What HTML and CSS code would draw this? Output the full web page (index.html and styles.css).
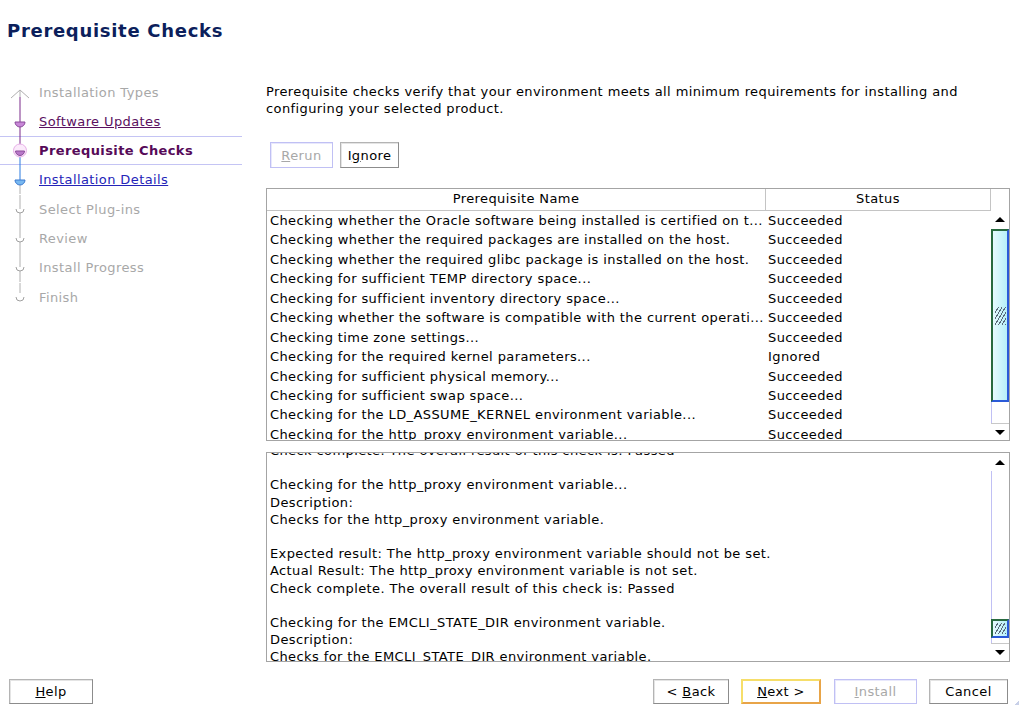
FILE: index.html
```html
<!DOCTYPE html>
<html lang="en">
  <head>
    <meta charset="UTF-8" />
    <title>Prerequisite Checks</title>
    <link rel="stylesheet" href="styles.css">
  </head>
  <body>
    <div class="window">
      <header class="title-bar">
        <h1>Prerequisite Checks</h1>
      </header>

      <div class="main">
        <nav class="steps">
          <div class="step">
            <svg class="track" width="31" height="29" viewBox="0 0 31 29">
              <path d="M3 20 L12 12 L21 20" fill="none" stroke="#b0b0b0" stroke-width="1"/>
              <line x1="12" y1="12" x2="12" y2="19" stroke="#b0b0b0"/>
              <line x1="12" y1="19" x2="12" y2="29" stroke="#7a2a8a"/>
            </svg>
            <span class="label">Installation Types</span>
          </div>
          <div class="step">
            <svg class="track" width="31" height="29" viewBox="0 0 31 29">
              <line x1="12" y1="0" x2="12" y2="29" stroke="#7a2a8a"/>
              <path d="M7 15 A5 5 0 0 0 17 15 Z" fill="#c888d8" stroke="#8a4a9a"/>
            </svg>
            <a class="label visited" href="#">Software Updates</a>
          </div>
          <div class="step current">
            <svg class="track" width="31" height="29" viewBox="0 0 31 29">
              <line x1="12" y1="0" x2="12" y2="14" stroke="#7a2a8a"/>
              <line x1="12" y1="14" x2="12" y2="29" stroke="#2a7ae0"/>
              <circle cx="12" cy="14.5" r="6.5" fill="#fbeafb" stroke="#e8b0e8"/>
              <path d="M7.5 15 A4.5 4.5 0 0 0 16.5 15 Z" fill="#b878c8" stroke="#8a4a9a"/>
            </svg>
            <span class="label">Prerequisite Checks</span>
          </div>
          <div class="step">
            <svg class="track" width="31" height="29" viewBox="0 0 31 29">
              <line x1="12" y1="0" x2="12" y2="15" stroke="#2a7ae0"/>
              <line x1="12" y1="18" x2="12" y2="29" stroke="#b0b0b0"/>
              <path d="M7 15 A5 5 0 0 0 17 15 Z" fill="#78b8f0" stroke="#3a7ad0"/>
            </svg>
            <a class="label link" href="#">Installation Details</a>
          </div>
          <div class="step">
            <svg class="track" width="31" height="29" viewBox="0 0 31 29">
              <line x1="12" y1="0" x2="12" y2="29" stroke="#b0b0b0"/>
              <path d="M8 14 A4 4 0 0 0 16 14" fill="#fff" stroke="#a0a0a0"/>
            </svg>
            <span class="label">Select Plug-ins</span>
          </div>
          <div class="step">
            <svg class="track" width="31" height="29" viewBox="0 0 31 29">
              <line x1="12" y1="0" x2="12" y2="29" stroke="#b0b0b0"/>
              <path d="M8 14 A4 4 0 0 0 16 14" fill="#fff" stroke="#a0a0a0"/>
            </svg>
            <span class="label">Review</span>
          </div>
          <div class="step">
            <svg class="track" width="31" height="29" viewBox="0 0 31 29">
              <line x1="12" y1="0" x2="12" y2="29" stroke="#b0b0b0"/>
              <path d="M8 14 A4 4 0 0 0 16 14" fill="#fff" stroke="#a0a0a0"/>
            </svg>
            <span class="label">Install Progress</span>
          </div>
          <div class="step">
            <svg class="track" width="31" height="29" viewBox="0 0 31 29">
              <line x1="12" y1="0" x2="12" y2="10" stroke="#b0b0b0"/>
              <path d="M8 14 A4 4 0 0 0 16 14" fill="#fff" stroke="#a0a0a0"/>
            </svg>
            <span class="label">Finish</span>
          </div>
        </nav>

        <section class="content">
          <p class="intro">Prerequisite checks verify that your environment meets all minimum requirements for installing and configuring your selected product.</p>

          <div class="actions">
            <button class="btn rerun disabled"><u>R</u>erun</button>
            <button class="btn ignore">I<u>g</u>nore</button>
          </div>

          <div class="checks">
            <div class="checks-head">
              <div class="col-name">Prerequisite Name</div>
              <div class="col-status">Status</div>
              <div class="corner"></div>
            </div>
            <div class="checks-body">
              <div class="rows">
                <div class="row"><span class="col-name">Checking whether the Oracle software being installed is certified on t...</span><span class="col-status">Succeeded</span></div>
                <div class="row"><span class="col-name">Checking whether the required packages are installed on the host.</span><span class="col-status">Succeeded</span></div>
                <div class="row"><span class="col-name">Checking whether the required glibc package is installed on the host.</span><span class="col-status">Succeeded</span></div>
                <div class="row"><span class="col-name">Checking for sufficient TEMP directory space...</span><span class="col-status">Succeeded</span></div>
                <div class="row"><span class="col-name">Checking for sufficient inventory directory space...</span><span class="col-status">Succeeded</span></div>
                <div class="row"><span class="col-name">Checking whether the software is compatible with the current operati...</span><span class="col-status">Succeeded</span></div>
                <div class="row"><span class="col-name">Checking time zone settings...</span><span class="col-status">Succeeded</span></div>
                <div class="row"><span class="col-name">Checking for the required kernel parameters...</span><span class="col-status">Ignored</span></div>
                <div class="row"><span class="col-name">Checking for sufficient physical memory...</span><span class="col-status">Succeeded</span></div>
                <div class="row"><span class="col-name">Checking for sufficient swap space...</span><span class="col-status">Succeeded</span></div>
                <div class="row"><span class="col-name">Checking for the LD_ASSUME_KERNEL environment variable...</span><span class="col-status">Succeeded</span></div>
                <div class="row"><span class="col-name">Checking for the http_proxy environment variable...</span><span class="col-status">Succeeded</span></div>
              </div>
              <div class="scrollbar table-scroll">
                <div class="arrow up"></div>
                <div class="gap-top"></div>
                <div class="thumb"><span class="grip"></span></div>
                <div class="track-rest"></div>
                <div class="arrow down"></div>
              </div>
            </div>
          </div>

          <div class="details">
            <div class="details-text"><pre>Check complete. The overall result of this check is: Passed

Checking for the http_proxy environment variable...
Description:
Checks for the http_proxy environment variable.

Expected result: The http_proxy environment variable should not be set.
Actual Result: The http_proxy environment variable is not set.
Check complete. The overall result of this check is: Passed

Checking for the EMCLI_STATE_DIR environment variable.
Description:
Checks for the EMCLI_STATE_DIR environment variable.
Expected result: The EMCLI_STATE_DIR environment variable should not be set.</pre></div>
            <div class="scrollbar detail-scroll">
              <div class="arrow up"></div>
              <div class="track-top"></div>
              <div class="thumb small"><span class="grip"></span></div>
              <div class="track-rest"></div>
              <div class="arrow down"></div>
            </div>
          </div>
        </section>
      </div>

      <footer class="footer">
        <button class="btn wide"><u>H</u>elp</button>
        <div class="nav-buttons">
          <button class="btn back">&lt; <u>B</u>ack</button>
          <button class="btn next"><u>N</u>ext &gt;</button>
          <button class="btn install disabled"><u>I</u>nstall</button>
          <button class="btn cancel">Cancel</button>
        </div>
      </footer>
      <span class="resize-grip"></span>
    </div>
  </body>
</html>
```

FILE: styles.css
```css
* {
  box-sizing: border-box;
}
body {
  margin: 0;
  background-color: white;
  font-family: "DejaVu Sans", Verdana, sans-serif;
  font-size: 13px;
  letter-spacing: 0.4px;
  color: #000;
}
.window {
  position: relative;
  width: 1021px;
  height: 707px;
  display: flex;
  flex-direction: column;
  overflow: hidden;
}
.title-bar {
  height: 77px;
  padding: 19px 0 0 7px;
}
.title-bar h1 {
  margin: 0;
  font-size: 18px;
  line-height: 24px;
  font-weight: bold;
  color: #0c1f5c;
  letter-spacing: 0.7px;
}
.main {
  display: flex;
  height: 586px;
}

/* left step list */
.steps {
  width: 242px;
  margin-right: 24px;
  padding-top: 0.4px;
}
.step {
  display: flex;
  align-items: center;
  height: 29.3px;
  padding-left: 8px;
  color: #a8a8a8;
}
.step .track {
  flex: none;
  display: block;
}
.step .label {
  white-space: nowrap;
}
.step.current {
  border-top: 1px solid #c4c4f4;
  border-bottom: 1px solid #c4c4f4;
  color: #560a58;
  font-weight: bold;
}
.step .visited {
  color: #5a1060;
}
.step .link {
  color: #2424b8;
}

/* right content */
.content {
  width: 744px;
  display: flex;
  flex-direction: column;
}
.intro {
  margin: 6px 0 0 0;
  line-height: 17px;
  padding-right: 40px;
}
.actions {
  display: flex;
  gap: 7px;
  margin: 25px 0 0 4px;
}
.btn {
  font-family: "DejaVu Sans", Verdana, sans-serif;
  font-size: 13px;
  letter-spacing: 0.4px;
  height: 26px;
  padding: 0;
  background: white;
  color: #000;
  border: 1px solid #b4b4b4;
  border-right-color: #8c8c8c;
  border-bottom-color: #8c8c8c;
  box-shadow: inset 1px 1px 0 #e4e4e4;
}
.btn.rerun {
  width: 63px;
}
.btn.ignore {
  width: 59px;
}
.btn.disabled {
  color: #a8a8a8;
  border-color: #c0c0f4;
  box-shadow: inset 1px 1px 0 #e8e8fc;
}

/* prerequisite table */
.checks {
  margin-top: 20px;
  height: 253px;
  border: 1px solid #a4a4a4;
  display: flex;
  flex-direction: column;
  overflow: hidden;
}
.checks-head {
  display: flex;
  height: 22px;
  flex: none;
}
.checks-head div {
  line-height: 20px;
  text-align: center;
  border-bottom: 1px solid #c4c4c4;
}
.checks-head .col-name {
  width: 499px;
  border-right: 1px solid #c4c4c4;
}
.checks-head .col-status {
  width: 225px;
  border-right: 1px solid #c4c4c4;
}
.checks-head .corner {
  flex: 1;
  border-bottom: none;
}
.checks-body {
  display: flex;
  flex: 1;
  min-height: 0;
}
.rows {
  width: 724px;
  overflow: hidden;
}
.row {
  display: flex;
  height: 19.45px;
  line-height: 19px;
  white-space: nowrap;
}
.row .col-name {
  width: 499px;
  padding-left: 3px;
  overflow: hidden;
}
.row .col-status {
  padding-left: 2px;
}

/* scrollbars */
.scrollbar {
  width: 18px;
  display: flex;
  flex-direction: column;
  margin-left: auto;
}
.arrow {
  position: relative;
  height: 17px;
  flex: none;
  background: white;
}
.arrow::after {
  content: "";
  position: absolute;
  left: 4px;
  top: 6px;
  border-left: 5px solid transparent;
  border-right: 5px solid transparent;
}
.arrow.up::after {
  border-bottom: 5px solid #000;
}
.arrow.down {
  border-top: 1px solid #c8c8c8;
}
.arrow.down::after {
  border-top: 5px solid #000;
}
.gap-top {
  height: 1px;
}
.thumb {
  display: flex;
  align-items: center;
  justify-content: center;
  border: 2px solid #2a5ad8;
  border-top-color: #286a40;
  border-left-color: #286a40;
  background: linear-gradient(to right, #e6fbff, #b6f0f8);
}
.table-scroll .thumb {
  height: 173px;
}
.grip {
  width: 11px;
  height: 18px;
  background: repeating-linear-gradient(-60deg, #5a6a7a 0 1px, transparent 1px 3px);
}
.thumb.small {
  height: 19px;
}
.thumb.small .grip {
  height: 11px;
}
.track-top,
.track-rest {
  border-left: 1px solid #c0c0f4;
  background: white;
}
.table-scroll .track-rest {
  flex: 1;
}
.detail-scroll .track-top {
  flex: 1;
}
.detail-scroll .track-rest {
  height: 5px;
}

/* details box */
.details {
  margin-top: 11px;
  height: 210px;
  border: 1px solid #a4a4a4;
  display: flex;
  overflow: hidden;
}
.detail-scroll {
  padding-top: 1px;
  padding-bottom: 1px;
}
.details-text {
  flex: 1;
  overflow: hidden;
  padding-left: 3px;
}
.details-text pre {
  margin: -11px 0 0 0;
  font-family: "DejaVu Sans", Verdana, sans-serif;
  font-size: 13px;
  letter-spacing: 0.4px;
  line-height: 17.2px;
}

/* footer */
.footer {
  display: flex;
  justify-content: space-between;
  padding: 16px 13px 0 9px;
}
.btn.wide {
  width: 84px;
  height: 25px;
}
.nav-buttons {
  display: flex;
  gap: 12px;
}
.nav-buttons .btn {
  height: 25px;
}
.btn.back {
  width: 76px;
}
.btn.next {
  width: 80px;
  border: 2px solid #f6de6a;
  border-right-color: #e8a448;
  border-bottom-color: #e8a448;
  box-shadow: none;
}
.btn.install {
  width: 83px;
  margin-left: 1px;
}
.btn.cancel {
  width: 79px;
}
.resize-grip {
  position: absolute;
  right: 2px;
  bottom: 2px;
  width: 4px;
  height: 4px;
  background: linear-gradient(135deg, transparent 50%, #c8d0e8 50%);
}
```
